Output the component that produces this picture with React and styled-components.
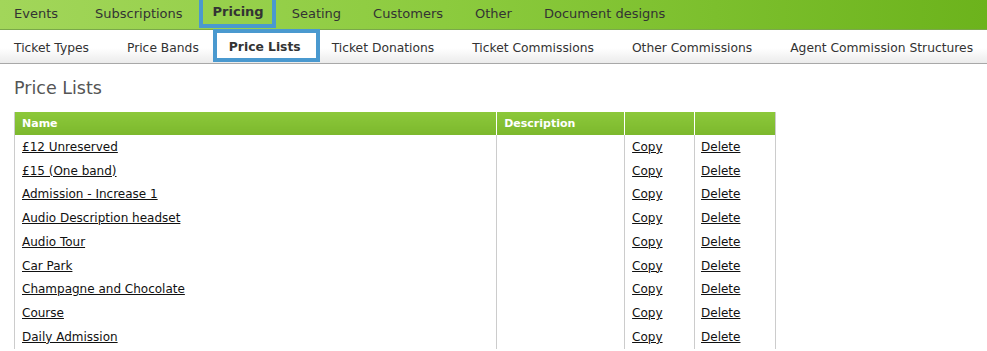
import React from 'react'
import styled, { createGlobalStyle } from 'styled-components'

const GlobalStyle = createGlobalStyle`
	html, body {
		margin: 0;
		padding: 0;
		background: #ffffff;
	}
	body {
		font-family: 'DejaVu Sans', Verdana, sans-serif;
		color: #222;
	}
`

const TopNav = styled.nav`
	display: flex;
	align-items: flex-start;
	height: 29px;
	background: linear-gradient(to right, #a2d65a 0%, #8ccb3e 45%, #6cb31c 100%);
	border-bottom: 1px solid #7aa84a;
`

const TopItem = styled.a`
	display: flex;
	align-items: center;
	flex-shrink: 0;
	white-space: nowrap;
	height: 28px;
	box-sizing: border-box;
	padding: 0 16px 1px;
	font-size: 13px;
	color: #333;
	font-weight: ${p => (p.active ? 'bold' : 'normal')};
	cursor: pointer;
	&:first-child {
		padding: 0 21px 1px 14px;
	}
	${p =>
		p.active &&
		`
		border: 4px solid #4a99cf;
		border-top: none;
		padding: 0 8px 1px 10px;
	`}
`

const SubNav = styled.nav`
	display: flex;
	align-items: flex-start;
	height: 33px;
	background: linear-gradient(to bottom, #ffffff 0%, #ffffff 55%, #ebebeb 100%);
	border-bottom: 1px solid #a8a8a8;
`

const SubItem = styled.a`
	display: flex;
	align-items: center;
	flex-shrink: 0;
	white-space: nowrap;
	height: 33px;
	box-sizing: border-box;
	padding: 3px 19px 0;
	font-size: 12.3px;
	color: #333;
	font-weight: ${p => (p.active ? 'bold' : 'normal')};
	cursor: pointer;
	&:first-child {
		padding-left: 14px;
	}
	${p =>
		p.active &&
		`
		background: #fff;
		border: 4px solid #4a99cf;
		padding: 3px 15px 0 12px;
		margin: -1px -7px 0 -5px;
	`}
`

const Content = styled.main`
	padding: 14px 14px 0;
`

const Heading = styled.h1`
	margin: 0 0 14px;
	font-size: 17.5px;
	font-weight: normal;
	color: #555;
`

const Table = styled.table`
	width: 762px;
	border-collapse: collapse;
	font-size: 12px;
	border-left: 1px solid #cccccc;
	border-right: 1px solid #cccccc;
`

const HeadCell = styled.th`
	height: 23px;
	padding: 0 7px;
	text-align: left;
	font-size: 11px;
	font-weight: bold;
	color: #ffffff;
	background: linear-gradient(to bottom, #8cc83a 0%, #7cb82d 100%);
	border-left: 1px solid #ffffff;
	&:first-child {
		border-left: none;
	}
`

const Cell = styled.td`
	height: 23.75px;
	padding: 0 7px 0 ${p => p.padLeft || '7px'};
	border-left: 1px solid #cccccc;
	vertical-align: middle;
	&:first-child {
		border-left: none;
	}
`

const Link = styled.a`
	color: #111;
	text-decoration: underline;
	cursor: pointer;
`

const topItems = [
	'Events',
	'Subscriptions',
	'Pricing',
	'Seating',
	'Customers',
	'Other',
	'Document designs',
]

const subItems = [
	'Ticket Types',
	'Price Bands',
	'Price Lists',
	'Ticket Donations',
	'Ticket Commissions',
	'Other Commissions',
	'Agent Commission Structures',
]

const priceLists = [
	'£12 Unreserved',
	'£15 (One band)',
	'Admission - Increase 1',
	'Audio Description headset',
	'Audio Tour',
	'Car Park',
	'Champagne and Chocolate',
	'Course',
	'Daily Admission',
]

const App = () => (
	<>
		<GlobalStyle />
		<TopNav>
			{topItems.map(item => (
				<TopItem key={item} active={item === 'Pricing'}>
					{item}
				</TopItem>
			))}
		</TopNav>
		<SubNav>
			{subItems.map(item => (
				<SubItem key={item} active={item === 'Price Lists'}>
					{item}
				</SubItem>
			))}
		</SubNav>
		<Content>
			<Heading>Price Lists</Heading>
			<Table>
				<colgroup>
					<col style={{ width: 483 }} />
					<col style={{ width: 128 }} />
					<col style={{ width: 70 }} />
					<col style={{ width: 81 }} />
				</colgroup>
				<thead>
					<tr>
						<HeadCell>Name</HeadCell>
						<HeadCell>Description</HeadCell>
						<HeadCell />
						<HeadCell />
					</tr>
				</thead>
				<tbody>
					{priceLists.map(name => (
						<tr key={name}>
							<Cell>
								<Link>{name}</Link>
							</Cell>
							<Cell />
							<Cell>
								<Link>Copy</Link>
							</Cell>
							<Cell padLeft="6px">
								<Link>Delete</Link>
							</Cell>
						</tr>
					))}
				</tbody>
			</Table>
		</Content>
	</>
)

export default App
